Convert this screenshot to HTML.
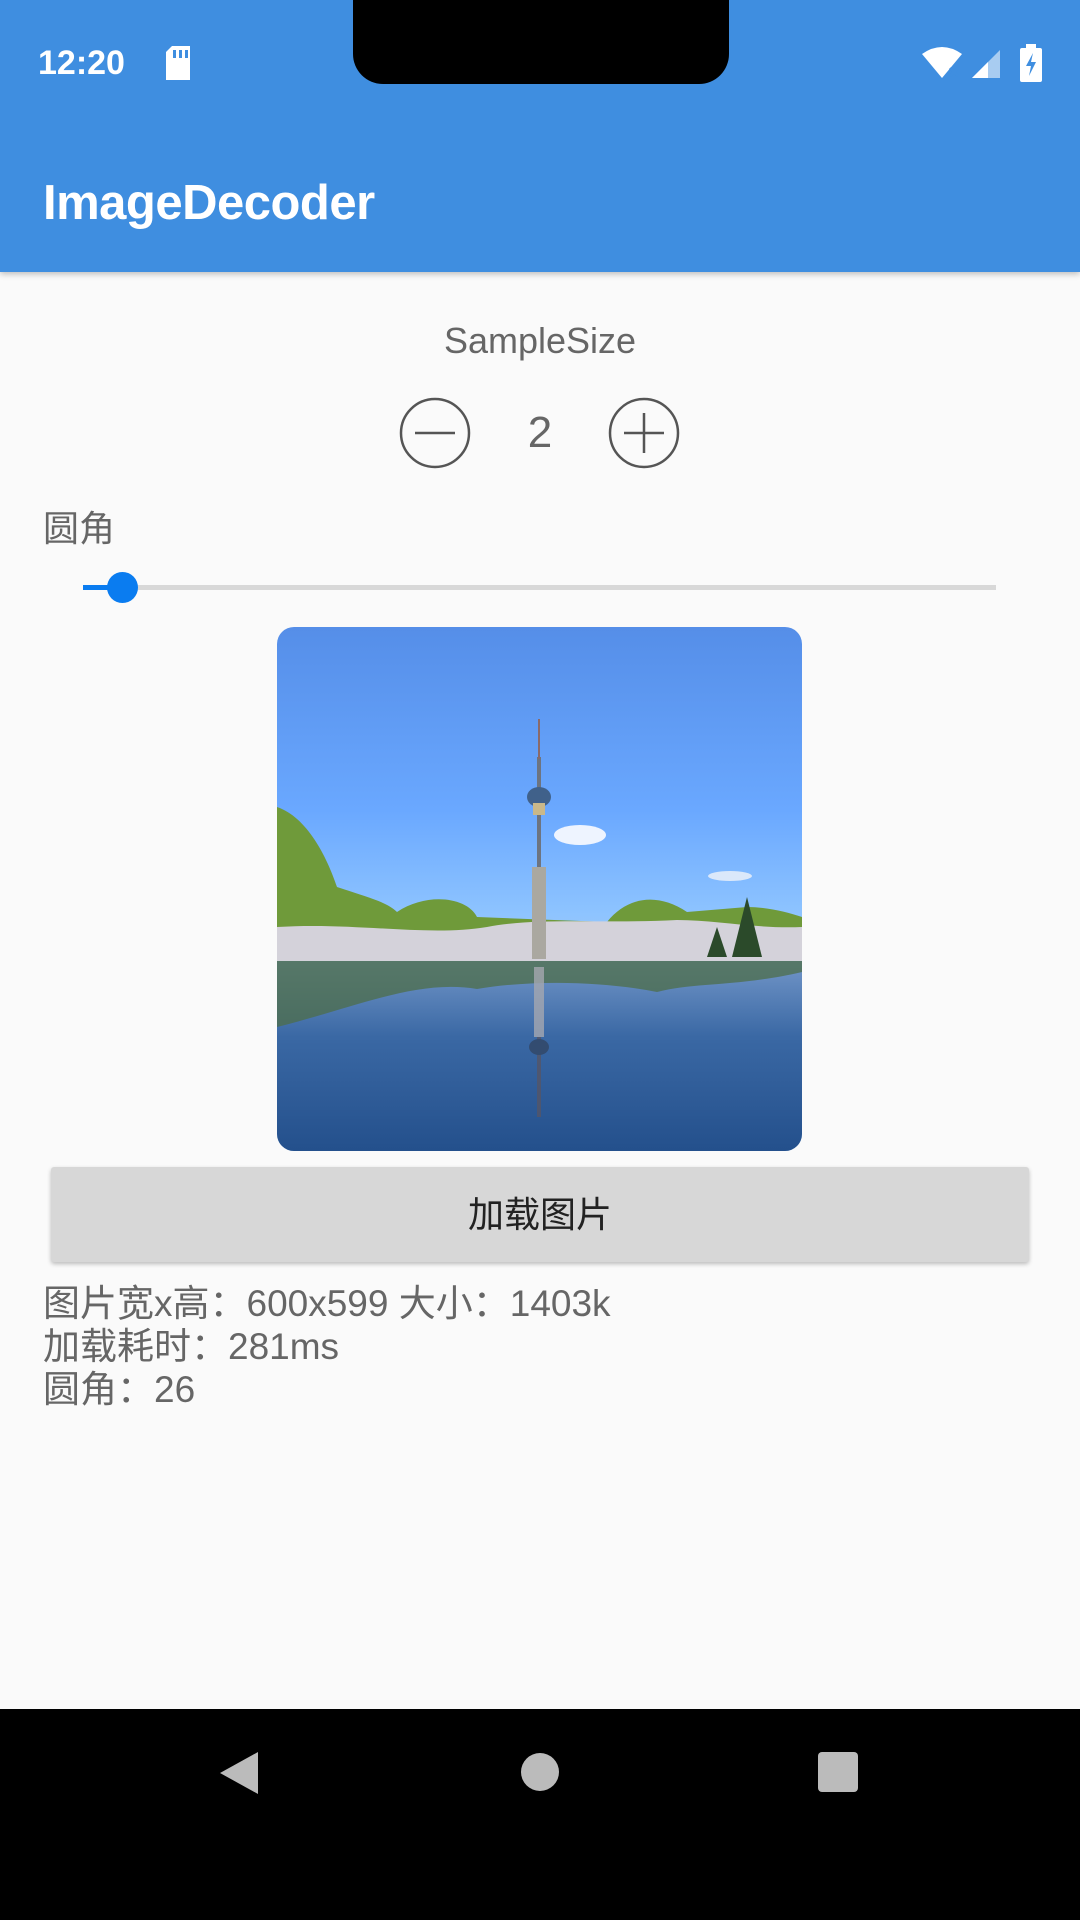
<!DOCTYPE html>
<html><head><meta charset="utf-8"><style>
*{margin:0;padding:0;box-sizing:border-box}
body{width:1080px;height:1920px;background:#fafafa;font-family:"Liberation Sans","Noto Sans CJK SC",sans-serif;position:relative;overflow:hidden}
.abs{position:absolute}
</style></head><body>
<div class="abs" style="left:0;top:0;width:1080px;height:272px;background:#3f8ee0;box-shadow:0 2px 6px rgba(0,0,0,.25)"></div>
<div class="abs" style="left:353px;top:0;width:376px;height:84px;background:#000;border-radius:0 0 30px 30px"></div>
<div class="abs" style="left:38px;top:44px;color:#fff;font-size:34px;font-weight:bold">12:20</div>
<svg class="abs" style="left:164px;top:46px" width="28" height="34" viewBox="0 0 28 34"><path d="M8 0H26V34H2V6Z" fill="#fff"/><rect x="9" y="4" width="3" height="8" fill="#3f8ee0"/><rect x="15" y="4" width="3" height="8" fill="#3f8ee0"/><rect x="21" y="4" width="3" height="8" fill="#3f8ee0"/></svg>
<svg class="abs" style="left:922px;top:46px" width="80" height="34" viewBox="0 0 80 34"><path d="M0 8 Q20 -6 40 8 L20 32Z" fill="#fff"/><path d="M28 22 l8 8 M36 22 l-8 8" stroke="#3f8ee0" stroke-width="3"/><path d="M50 32 L78 4 V32Z" fill="rgba(255,255,255,.55)"/><path d="M50 32 L66 16 V32Z" fill="#fff"/></svg>
<svg class="abs" style="left:1020px;top:44px" width="22" height="38" viewBox="0 0 22 38"><rect x="6" y="0" width="10" height="5" fill="#fff"/><rect x="0" y="4" width="22" height="34" rx="2" fill="#fff"/><path d="M13 9 L6 22 H11 L9 32 L16 18 H11Z" fill="#3f8ee0"/></svg>
<div class="abs" style="left:43px;top:173px;color:#fff;font-size:49px;line-height:60px;font-weight:bold;letter-spacing:-0.5px">ImageDecoder</div>

<div class="abs" style="left:0;width:1080px;top:320px;text-align:center;color:#666;font-size:36px">SampleSize</div>
<svg class="abs" style="left:398px;top:396px" width="74" height="74"><circle cx="37" cy="37" r="34" fill="none" stroke="#555" stroke-width="2.5"/><path d="M17 37H57" stroke="#555" stroke-width="2.5"/></svg>
<div class="abs" style="left:500px;width:80px;top:408px;text-align:center;color:#666;font-size:44px">2</div>
<svg class="abs" style="left:607px;top:396px" width="74" height="74"><circle cx="37" cy="37" r="34" fill="none" stroke="#555" stroke-width="2.5"/><path d="M17 37H57M37 17V57" stroke="#555" stroke-width="2.5"/></svg>
<div class="abs" style="left:43px;top:500px;color:#666;font-size:36px">圆角</div>
<div class="abs" style="left:83px;top:585px;width:913px;height:5px;background:#d8d8d8"></div>
<div class="abs" style="left:83px;top:585px;width:40px;height:5px;background:#0a7cf0"></div>
<div class="abs" style="left:107px;top:572px;width:31px;height:31px;border-radius:50%;background:#0a7cf0"></div>

<div class="abs" style="left:277px;top:627px;width:525px;height:524px;border-radius:17px;overflow:hidden;background:linear-gradient(#558ee8 0%,#6aa8ff 35%,#8ec4ff 55%,#9cc8f4 60%)">
 <svg width="525" height="524" viewBox="0 0 525 524" style="position:absolute;left:0;top:0">
  <ellipse cx="303" cy="208" rx="26" ry="10" fill="#eef4ff"/>
  <ellipse cx="453" cy="249" rx="22" ry="5" fill="#dbe8fa"/>
  <rect x="0" y="334" width="525" height="190" fill="url(#w)"/>
  <defs><linearGradient id="w" x1="0" y1="0" x2="0" y2="1"><stop offset="0" stop-color="#7296c8"/><stop offset=".4" stop-color="#3a68a4"/><stop offset="1" stop-color="#24508c"/></linearGradient></defs>
  <path d="M0 180 C30 190 50 230 60 260 C90 270 110 275 120 285 C150 265 190 270 200 290 L330 295 C350 270 380 265 410 285 L470 280 C490 280 510 285 525 290 V334 H0Z" fill="#6f9a3a"/>
  <path d="M0 300 C80 295 150 310 210 300 C260 290 330 297 400 293 C440 293 480 302 525 300 V334 H0Z" fill="#d4d2da"/>
  <path d="M0 334 H525 V345 C460 360 420 355 380 365 C330 355 260 352 200 362 C140 352 80 380 0 400Z" fill="#4e6d48" opacity=".75"/>
  <path d="M455 330 L470 270 L485 330Z M430 330 L440 300 L450 330Z" fill="#2b4a2a"/>
  <rect x="255" y="240" width="14" height="92" fill="#aaa8a0"/>
  <rect x="260" y="130" width="4" height="110" fill="#6d7480"/>
  <rect x="261" y="92" width="2" height="40" fill="#8a6a6a"/>
  <ellipse cx="262" cy="170" rx="12" ry="10" fill="#40618a"/>
  <rect x="256" y="176" width="12" height="12" fill="#c9b88a"/>
  <rect x="257" y="340" width="10" height="70" fill="#a5a8b0" opacity=".8"/>
  <rect x="260" y="410" width="4" height="80" fill="#556" opacity=".8"/>
  <ellipse cx="262" cy="420" rx="10" ry="8" fill="#334c70"/>
 </svg>
</div>

<div class="abs" style="left:51px;top:1167px;width:978px;height:95px;background:#d7d7d7;border-radius:3px;box-shadow:0 2px 4px rgba(0,0,0,.25);text-align:center;line-height:95px;font-size:36px;color:#222">加载图片</div>
<div class="abs" style="left:43px;top:1282px;color:#666;font-size:37px;line-height:43px">图片宽x高：600x599 大小：1403k<br>加载耗时：281ms<br>圆角：26</div>

<div class="abs" style="left:0;top:1709px;width:1080px;height:211px;background:#000"></div>
<svg class="abs" style="left:218px;top:1750px" width="42" height="46"><path d="M40 2 V44 L2 23Z" fill="#bbb"/></svg>
<div class="abs" style="left:521px;top:1753px;width:38px;height:38px;border-radius:50%;background:#bbb"></div>
<div class="abs" style="left:818px;top:1752px;width:40px;height:40px;border-radius:4px;background:#bbb"></div>
</body></html>
